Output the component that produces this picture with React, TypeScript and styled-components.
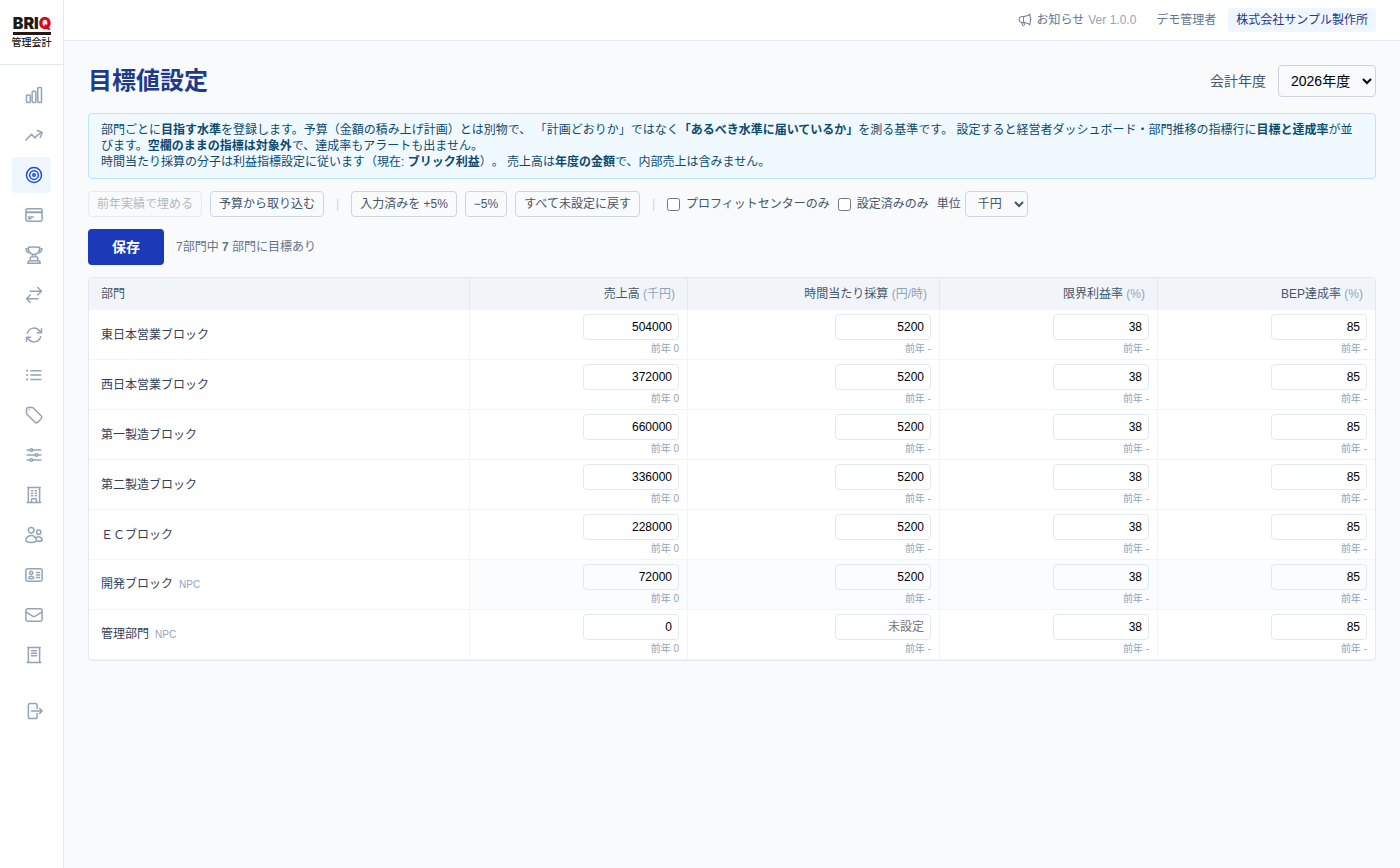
import React, { useState } from "react";
import styled, { createGlobalStyle, css } from "styled-components";
import {
  HiOutlineChartBar,
  HiOutlineArrowTrendingUp,
  HiOutlineCreditCard,
  HiOutlineTrophy,
  HiOutlineArrowsRightLeft,
  HiOutlineArrowPath,
  HiOutlineListBullet,
  HiOutlineTag,
  HiOutlineAdjustmentsHorizontal,
  HiOutlineBuildingOffice,
  HiOutlineUsers,
  HiOutlineIdentification,
  HiOutlineEnvelope,
  HiOutlineArrowRightOnRectangle,
  HiOutlineMegaphone,
} from "react-icons/hi2";

const GlobalStyle = createGlobalStyle`
  *, *::before, *::after { box-sizing: border-box; }
  body {
    margin: 0;
    background: #f8fafc;
    color: #334155;
    font-family: "Liberation Sans", "Noto Sans CJK JP", sans-serif;
    font-size: 12px;
    line-height: 16px;
    text-spacing-trim: space-all;
  }
  button, input, select { font: inherit; color: inherit; margin: 0; }
`;

const Shell = styled.div`
  display: flex;
  min-height: 100vh;
`;

const Sidebar = styled.aside`
  flex: 0 0 64px;
  background: #fff;
  border-right: 1px solid #e2e8f0;
`;

const Brand = styled.a`
  display: flex;
  flex-direction: column;
  align-items: center;
  height: 65px;
  padding-top: 12px;
  border-bottom: 1px solid #e2e8f0;
  color: #231815;
  text-decoration: none;
`;

const BrandMark = styled.svg`
  display: block;
  width: 40px;
  height: 24px;
  overflow: visible;
`;

const BrandName = styled.span`
  font-size: 10px;
  line-height: 14px;
  font-weight: 500;
`;

const Nav = styled.nav`
  display: flex;
  flex-direction: column;
  gap: 4px;
  padding: 12px;
`;

const NavLink = styled.a<{ $active?: boolean; $spaced?: boolean }>`
  display: flex;
  align-items: center;
  height: 36px;
  padding-left: 12px;
  border-radius: 4px;
  color: ${(p) => (p.$active ? "#1d4ed8" : "#94a3b8")};
  background: ${(p) => (p.$active ? "#eff6ff" : "transparent")};
  ${(p) => p.$spaced && css`margin-top: 16px;`}
  svg { flex: none; width: 20px; height: 20px; stroke-width: 1.8; }
`;

const Page = styled.div`
  flex: 1;
  min-width: 0;
`;

const TopBar = styled.header`
  display: flex;
  align-items: center;
  justify-content: flex-end;
  height: 41px;
  padding: 0 24px;
  background: #fff;
  border-bottom: 1px solid #e2e8f0;
  color: #64748b;
`;

const News = styled.a`
  display: flex;
  align-items: center;
  gap: 4px;
  margin-right: 20px;
  color: inherit;
  text-decoration: none;
  svg { width: 16px; height: 16px; }
`;

const Muted = styled.span`
  color: #94a3b8;
`;

const Company = styled.span`
  margin-left: 12px;
  padding: 4px 8px;
  border-radius: 4px;
  background: #eff6ff;
  color: #1e3a8a;
`;

const Main = styled.main`
  display: flex;
  flex-direction: column;
  gap: 12px;
  padding: 24px;
`;

const TitleRow = styled.div`
  display: flex;
  align-items: center;
  justify-content: space-between;
  margin-bottom: 4px;
`;

const Title = styled.h1`
  margin: 0;
  color: #1e3a8a;
  font-size: 24px;
  line-height: 32px;
`;

const YearField = styled.label`
  display: flex;
  align-items: center;
  gap: 12px;
  color: #475569;
  font-size: 14px;
`;

const Select = styled.select<{ $large?: boolean }>`
  height: ${(p) => (p.$large ? 32 : 26)}px;
  padding: 0 8px;
  border: 1px solid #cbd5e1;
  border-radius: 4px;
  background: transparent;
  color: ${(p) => (p.$large ? "#000" : "#475569")};
`;

const Notice = styled.section`
  padding: 8px 12px;
  border: 1px solid #bae6fd;
  border-radius: 4px;
  background: #f0f9ff;
  color: #0c4a6e;
  p { margin: 0; }
`;

const Toolbar = styled.div`
  display: flex;
  align-items: center;
  flex-wrap: wrap;
  gap: 8px;
  color: #475569;
`;

const ToolButton = styled.button`
  height: 26px;
  padding: 0 8px;
  border: 1px solid #cbd5e1;
  border-radius: 4px;
  background: transparent;
  &:disabled { opacity: 0.4; }
`;

const Separator = styled.span`
  margin: 0 4px;
  color: #cbd5e1;
`;

const Check = styled.label<{ $tight?: boolean }>`
  display: flex;
  align-items: center;
  gap: ${(p) => (p.$tight ? 4 : 6)}px;
`;

const SaveRow = styled.div`
  display: flex;
  align-items: center;
  gap: 12px;
  color: #64748b;
`;

const SaveButton = styled.button`
  height: 36px;
  padding: 0 24px;
  border: 0;
  border-radius: 4px;
  background: #1a3ab8;
  color: #fff;
  font-size: 14px;
  font-weight: 700;
`;

const TableFrame = styled.div`
  border: 1px solid #e2e8f0;
  border-radius: 4px;
  background: #fff;
  overflow: hidden;
`;

const Table = styled.table`
  width: 100%;
  border-collapse: separate;
  border-spacing: 0;
  table-layout: fixed;
`;

const HeadCell = styled.th<{ $numeric?: boolean; $width?: number }>`
  width: ${(p) => (p.$width ? `${p.$width}px` : "auto")};
  padding: 8px 12px;
  background: #f1f5f9;
  color: #475569;
  font-weight: 400;
  text-align: ${(p) => (p.$numeric ? "right" : "left")};
  & + & { border-left: 1px solid #e2e8f0; }
`;

const NameCell = styled.th`
  padding: 4px 12px;
  border-bottom: 1px solid #f1f5f9;
  font-weight: 400;
  text-align: left;
`;

const Tag = styled.span`
  margin-left: 6px;
  color: #94a3b8;
  font-size: 10px;
`;

const ValueCell = styled.td<{ $tinted?: boolean }>`
  padding: 4px 8px;
  border-left: 1px solid #f1f5f9;
  border-bottom: 1px solid #f1f5f9;
  background: ${(p) => (p.$tinted ? "#fafcfd" : "transparent")};
  text-align: right;
`;

const ValueInput = styled.input`
  display: block;
  width: 96px;
  height: 26px;
  margin-left: auto;
  padding: 0 6px;
  border: 1px solid #e2e8f0;
  border-radius: 4px;
  background: transparent;
  color: #000;
  text-align: right;
  &::placeholder { color: #757575; }
`;

const Previous = styled.div`
  margin-top: 2px;
  color: #94a3b8;
  font-size: 10px;
  line-height: 13px;
`;

const TargetIcon = () => (
  <svg viewBox="0 0 24 24" fill="none" stroke="currentColor" strokeWidth="1.5" aria-hidden="true">
    <circle cx="12" cy="12" r="9" />
    <circle cx="12" cy="12" r="5.25" />
    <circle cx="12" cy="12" r="1.5" />
  </svg>
);

const LedgerIcon = () => (
  <svg viewBox="0 0 24 24" fill="none" stroke="currentColor" strokeWidth="1.5" strokeLinecap="round" strokeLinejoin="round" aria-hidden="true">
    <path d="M4.5 3h15M3.75 21h16.5M5.25 3v18M18.75 3v18M9 6.75h6M9 9.75h6M9 12.75h6" />
  </svg>
);

const navItems = [
  { label: "ダッシュボード", Icon: HiOutlineChartBar },
  { label: "部門推移", Icon: HiOutlineArrowTrendingUp },
  { label: "目標値設定", Icon: TargetIcon, active: true },
  { label: "予算", Icon: HiOutlineCreditCard },
  { label: "ランキング", Icon: HiOutlineTrophy },
  { label: "内部取引", Icon: HiOutlineArrowsRightLeft },
  { label: "更新", Icon: HiOutlineArrowPath },
  { label: "一覧", Icon: HiOutlineListBullet },
  { label: "タグ", Icon: HiOutlineTag },
  { label: "設定", Icon: HiOutlineAdjustmentsHorizontal },
  { label: "部門", Icon: HiOutlineBuildingOffice },
  { label: "ユーザー", Icon: HiOutlineUsers },
  { label: "社員", Icon: HiOutlineIdentification },
  { label: "メール", Icon: HiOutlineEnvelope },
  { label: "会社", Icon: LedgerIcon },
  { label: "ログアウト", Icon: HiOutlineArrowRightOnRectangle, spaced: true },
];

const columns = [
  { label: "売上高", unit: "(千円)", width: 218 },
  { label: "時間当たり採算", unit: "(円/時)", width: 252 },
  { label: "限界利益率", unit: "(%)", width: 218 },
  { label: "BEP達成率", unit: "(%)", width: 218 },
];

const departments = [
  { name: "東日本営業ブロック", values: ["504000", "5200", "38", "85"] },
  { name: "西日本営業ブロック", values: ["372000", "5200", "38", "85"] },
  { name: "第一製造ブロック", values: ["660000", "5200", "38", "85"] },
  { name: "第二製造ブロック", values: ["336000", "5200", "38", "85"] },
  { name: "ＥＣブロック", values: ["228000", "5200", "38", "85"] },
  { name: "開発ブロック", npc: true, tinted: true, values: ["72000", "5200", "38", "85"] },
  { name: "管理部門", npc: true, values: ["0", "", "38", "85"] },
];

export default function App() {
  const [rows, setRows] = useState(departments);

  const setValue = (row: number, col: number, value: string) =>
    setRows((prev) =>
      prev.map((r, i) => (i === row ? { ...r, values: r.values.map((v, j) => (j === col ? value : v)) } : r))
    );

  return (
    <>
      <GlobalStyle />
      <Shell>
        <Sidebar>
          <Brand href="#">
            <BrandMark viewBox="0 0 40 24" aria-label="BRIQ">
              <text x="20" y="17" textAnchor="middle" fontFamily="Inter" fontWeight="900" fontSize="16" fill="#231815">
                BRI<tspan fill="#e60012">Q</tspan>
              </text>
              <rect x="1" y="20" width="38" height="3" fill="#231815" />
            </BrandMark>
            <BrandName>管理会計</BrandName>
          </Brand>
          <Nav>
            {navItems.map(({ label, Icon, active, spaced }) => (
              <NavLink key={label} href="#" aria-label={label} $active={active} $spaced={spaced}>
                <Icon />
              </NavLink>
            ))}
          </Nav>
        </Sidebar>
        <Page>
          <TopBar>
            <News href="#">
              <HiOutlineMegaphone />
              <span>お知らせ</span>
              <Muted>Ver 1.0.0</Muted>
            </News>
            <span>デモ管理者</span>
            <Company>株式会社サンプル製作所</Company>
          </TopBar>
          <Main>
            <TitleRow>
              <Title>目標値設定</Title>
              <YearField>
                会計年度
                <Select $large defaultValue="2026">
                  <option value="2026">2026年度</option>
                </Select>
              </YearField>
            </TitleRow>
            <Notice>
              <p>
                部門ごとに<strong>目指す水準</strong>を登録します。予算（金額の積み上げ計画）とは別物で、 「計画どおりか」ではなく
                <strong>「あるべき水準に届いているか」</strong>を測る基準です。
                {" "}設定すると経営者ダッシュボード・部門推移の指標行に<strong>目標と達成率</strong>が並びます。
                <strong>空欄のままの指標は対象外</strong>で、達成率もアラートも出ません。
              </p>
              <p>
                時間当たり採算の分子は利益指標設定に従います（現在: <strong>ブリック利益</strong>）。 売上高は
                <strong>年度の金額</strong>で、内部売上は含みません。
              </p>
            </Notice>
            <Toolbar>
              <ToolButton type="button" disabled>前年実績で埋める</ToolButton>
              <ToolButton type="button">予算から取り込む</ToolButton>
              <Separator>|</Separator>
              <ToolButton type="button">入力済みを +5%</ToolButton>
              <ToolButton type="button">−5%</ToolButton>
              <ToolButton type="button">すべて未設定に戻す</ToolButton>
              <Separator>|</Separator>
              <Check><input type="checkbox" />プロフィットセンターのみ</Check>
              <Check><input type="checkbox" />設定済みのみ</Check>
              <Check $tight>
                単位
                <Select defaultValue="1000">
                  <option value="1000">千円</option>
                </Select>
              </Check>
            </Toolbar>
            <SaveRow>
              <SaveButton type="button">保存</SaveButton>
              <span>7部門中 <strong>7</strong> 部門に目標あり</span>
            </SaveRow>
            <TableFrame>
              <Table>
                <thead>
                  <tr>
                    <HeadCell scope="col">部門</HeadCell>
                    {columns.map((c) => (
                      <HeadCell key={c.label} scope="col" $numeric $width={c.width}>
                        {c.label} <Muted>{c.unit}</Muted>
                      </HeadCell>
                    ))}
                  </tr>
                </thead>
                <tbody>
                  {rows.map((r, i) => (
                    <tr key={r.name}>
                      <NameCell scope="row">
                        {r.name}
                        {r.npc && <Tag>NPC</Tag>}
                      </NameCell>
                      {r.values.map((v, j) => (
                        <ValueCell key={columns[j].label} $tinted={r.tinted}>
                          <ValueInput
                            value={v}
                            placeholder="未設定"
                            inputMode="numeric"
                            aria-label={`${r.name} ${columns[j].label}`}
                            onChange={(e) => setValue(i, j, e.target.value)}
                          />
                          <Previous>前年 {j === 0 ? "0" : "-"}</Previous>
                        </ValueCell>
                      ))}
                    </tr>
                  ))}
                </tbody>
              </Table>
            </TableFrame>
          </Main>
        </Page>
      </Shell>
    </>
  );
}
